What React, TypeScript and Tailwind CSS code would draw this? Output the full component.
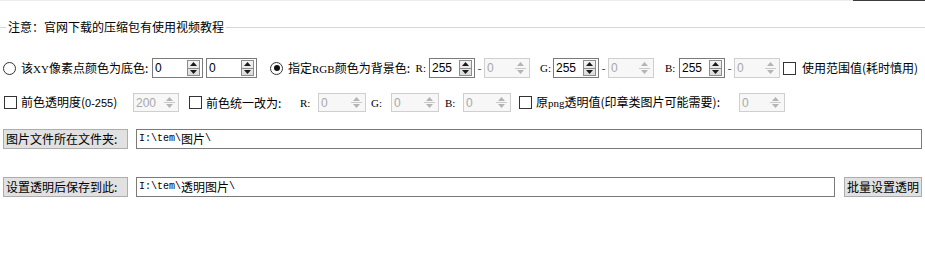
import clsx from "clsx";

const cjk = "font-['SimSun','Noto_Sans_CJK_SC',sans-serif] text-[12px] leading-[14px]";
const mono = "font-['Liberation_Mono',monospace] text-[10px]";
const ser = "font-['Liberation_Serif',serif] text-[11px]";

function Arrows({ disabled }: { disabled?: boolean }) {
  const c = disabled ? "#b4b4b4" : "#1a1a1a";
  return (
    <div
      className={clsx(
        "flex h-[16px] w-[13px] flex-col",
        disabled ? "border border-transparent" : "border border-[#8c8c8c] bg-gradient-to-b from-[#f4f4f4] to-[#dcdcdc]"
      )}
    >
      <div className="flex flex-1 items-center justify-center">
        <svg width="7" height="4" viewBox="0 0 7 4">
          <path d="M3.5 0 L7 4 L0 4 Z" fill={c} />
        </svg>
      </div>
      <div className={clsx("h-px", disabled ? "bg-[#c8c8c8]" : "bg-[#8c8c8c]")} />
      <div className="flex flex-1 items-center justify-center">
        <svg width="7" height="4" viewBox="0 0 7 4">
          <path d="M0 0 L7 0 L3.5 4 Z" fill={c} />
        </svg>
      </div>
    </div>
  );
}

function Spin({ value, className, disabled }: { value: string; className: string; disabled?: boolean }) {
  return (
    <div
      className={clsx(
        "flex h-full shrink-0 items-center justify-between border pr-[2px]",
        disabled ? "border-[#cfcfcf] bg-[#f7f7f7] text-[#a8a8a8]" : "border-[#7a7a7a] bg-white text-black",
        className
      )}
    >
      <span className="pl-[2px] font-['Liberation_Sans',sans-serif] text-[12px]">{value}</span>
      <Arrows disabled={disabled} />
    </div>
  );
}

function Check() {
  return <div className="h-[13px] w-[13px] shrink-0 border border-[#333333] bg-white" />;
}

function Radio({ checked }: { checked?: boolean }) {
  return (
    <div className="flex h-[13px] w-[13px] shrink-0 items-center justify-center rounded-full border border-[#333333] bg-white">
      {checked && <div className="h-[6px] w-[6px] rounded-full bg-[#111111]" />}
    </div>
  );
}

function Dash() {
  return <span className="w-[9px] shrink-0 text-center text-[12px] text-[#444444]">-</span>;
}

function Label({ children }: { children: React.ReactNode }) {
  return (
    <div className="flex h-full w-[125px] shrink-0 items-center border border-[#adadad] bg-[#e1e1e1] pl-[2px] whitespace-nowrap">
      {children}
    </div>
  );
}

export default function App() {
  return (
    <div className={clsx("flex h-[257px] w-[925px] flex-col overflow-hidden bg-white text-black", cjk)}>
      <div className="flex h-px">
        <div className="flex-1 bg-[#ececec]" />
        <div className="w-[72px] bg-[#3c3c3c]" />
      </div>

      <div className="mt-[18px] flex h-[16px] items-center">
        <div className="h-px w-[6px] bg-[#d7d7d7]" />
        <span className="px-[2px] whitespace-nowrap">注意：官网下载的压缩包有使用视频教程</span>
        <div className="h-px flex-1 bg-[#d7d7d7]" />
      </div>

      <div className="mt-[23px] flex h-[20px] items-center whitespace-nowrap">
        <div className="ml-[3px]">
          <Radio />
        </div>
        <span className="ml-[5px] w-[131px] shrink-0">
          该<span className={ser}>XY</span>像素点颜色为底色:
        </span>
        <Spin value="0" className="w-[51px]" />
        <Spin value="0" className="ml-[3px] w-[51px]" />
        <div className="ml-[13px]">
          <Radio checked />
        </div>
        <div className="ml-[5px] flex w-[141px] shrink-0 items-center justify-between pr-[3px]">
          <span>
            指定<span className={ser}>RGB</span>颜色为背景色:
          </span>
          <span className={ser}>R:</span>
        </div>
        <Spin value="255" className="w-[46px]" />
        <Dash />
        <Spin value="0" className="w-[46px]" disabled />
        <span className={clsx(ser, "w-[23px] shrink-0 pl-[10px]")}>G:</span>
        <Spin value="255" className="w-[46px]" />
        <Dash />
        <Spin value="0" className="w-[46px]" disabled />
        <span className={clsx(ser, "w-[25px] shrink-0 pl-[11px]")}>B:</span>
        <Spin value="255" className="w-[46px]" />
        <Dash />
        <Spin value="0" className="w-[46px]" disabled />
        <div className="ml-[3px]">
          <Check />
        </div>
        <span className="ml-[6px]">使用范围值(耗时慎用)</span>
      </div>

      <div className="mt-[15px] flex h-[19px] items-center whitespace-nowrap">
        <div className="ml-[4px]">
          <Check />
        </div>
        <span className="ml-[4px] w-[112px] shrink-0">
          前色透明度(<span className="font-['Liberation_Sans',sans-serif] text-[11px]">0-255</span>)
        </span>
        <Spin value="200" className="w-[46px]" disabled />
        <div className="ml-[10px]">
          <Check />
        </div>
        <span className="ml-[4px] w-[94px] shrink-0">前色统一改为:</span>
        <span className={clsx(ser, "w-[18px] shrink-0")}>R:</span>
        <Spin value="0" className="w-[48px]" disabled />
        <span className={clsx(ser, "w-[25px] shrink-0 pl-[5px]")}>G:</span>
        <Spin value="0" className="w-[48px]" disabled />
        <span className={clsx(ser, "w-[24px] shrink-0 pl-[6px]")}>B:</span>
        <Spin value="0" className="w-[48px]" disabled />
        <div className="ml-[8px]">
          <Check />
        </div>
        <span className="ml-[4px] w-[203px] shrink-0">
          原<span className={ser}>png</span>透明值(印章类图片可能需要):
        </span>
        <Spin value="0" className="w-[46px]" disabled />
      </div>

      <div className="mt-[17px] ml-[3px] flex h-[20px] items-center">
        <Label>图片文件所在文件夹:</Label>
        <div className="ml-[8px] flex h-full w-[786px] items-center border border-[#7a7a7a] bg-white pl-[2px] whitespace-nowrap">
          <span className={mono}>I:\tem\</span>图片<span className={mono}>\</span>
        </div>
      </div>

      <div className="mt-[28px] ml-[3px] flex h-[20px] items-center">
        <Label>设置透明后保存到此:</Label>
        <div className="ml-[8px] flex h-full w-[699px] items-center border border-[#7a7a7a] bg-white pl-[2px] whitespace-nowrap">
          <span className={mono}>I:\tem\</span>透明图片<span className={mono}>\</span>
        </div>
        <div className="ml-[9px] flex h-full w-[78px] items-center justify-center border border-[#adadad] bg-[#e1e1e1] whitespace-nowrap">
          批量设置透明
        </div>
      </div>
    </div>
  );
}
